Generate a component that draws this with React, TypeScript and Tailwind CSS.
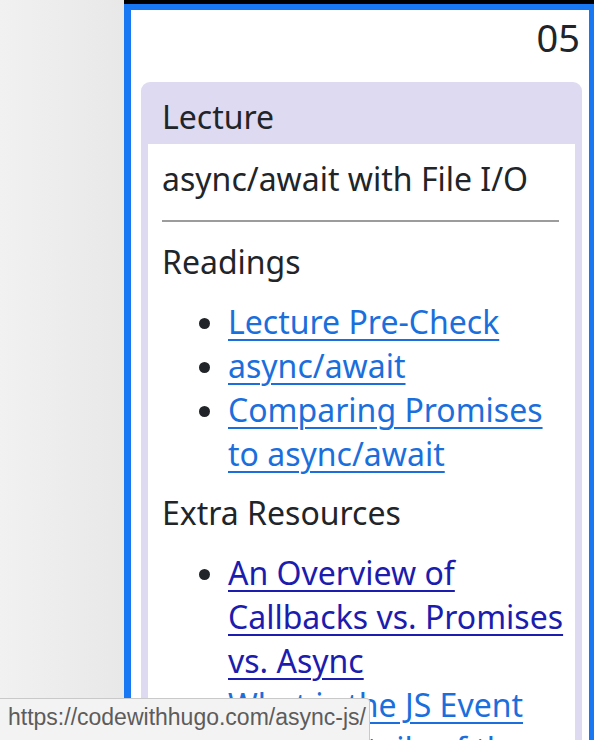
import React from "react";

type Link = { title: string; tone: "blue" | "dark" };

const readings: Link[] = [
  { title: "Lecture Pre-Check", tone: "blue" },
  { title: "async/await", tone: "blue" },
  { title: "Comparing Promises to async/await", tone: "blue" },
];

const extras: Link[] = [
  { title: "An Overview of Callbacks vs. Promises vs. Async", tone: "dark" },
  { title: "What is the JS Event Loop? Details of the call stack", tone: "blue" },
];

const LinkList = ({ items }: { items: Link[] }) => (
  <ul className="list-disc pl-[66px] mb-[15px] text-[#212529]">
    {items.map((item) => (
      <li key={item.title}>
        <a
          href="#"
          className={
            "underline decoration-[2px] underline-offset-[5px] " +
            (item.tone === "dark" ? "text-[#1c1cae]" : "text-[#1b6fdc]")
          }
        >
          {item.title}
        </a>
      </li>
    ))}
  </ul>
);

export default function App() {
  return (
    <div className="relative flex w-[594px] h-[740px] overflow-hidden bg-white font-['Noto_Sans',sans-serif]">
      <div className="w-[124px] shrink-0 bg-gradient-to-r from-[#f1f1f2] to-[#e8e8e9]" />

      <div className="flex-1 flex flex-col">
        <div className="h-[4px] shrink-0 bg-black" />
        <div className="flex-1 bg-white border-l-[7px] border-t-[6px] border-r-[5px] border-[#1877f2]">
          <div className="text-right text-[38px] leading-[44px] pt-[5px] pr-[9px] text-[#212529]">05</div>

          <div className="mt-[23px] ml-[10px] mr-[7px] rounded-t-[9px] bg-[#dedaf1] px-[7px] text-[32px] leading-[44px] text-[#212529]">
            <div className="pl-[14px] pt-[13px] pb-[5px]">Lecture</div>
            <div className="bg-white pl-[14px] pr-[10px] pt-[13px] h-[600px]">
              <div>async/await with File I/O</div>
              <hr className="mt-[19px] mb-[18px] mr-[6px] border-0 border-t-2 border-[#9c9c9c]" />
              <h5 className="mb-[16px]">Readings</h5>
              <LinkList items={readings} />
              <h5 className="mb-[16px]">Extra Resources</h5>
              <LinkList items={extras} />
            </div>
          </div>
        </div>
      </div>

      <div className="absolute left-0 bottom-0 h-[42px] w-[370px] bg-[#f3f3f3] border-t border-r border-[#c9c9c9] rounded-tr-[4px] pl-[8px] pt-[2px] font-['Liberation_Sans',sans-serif] text-[23px] leading-[32px] text-[#5c5c5c]">
        https://codewithhugo.com/async-js/
      </div>
    </div>
  );
}
